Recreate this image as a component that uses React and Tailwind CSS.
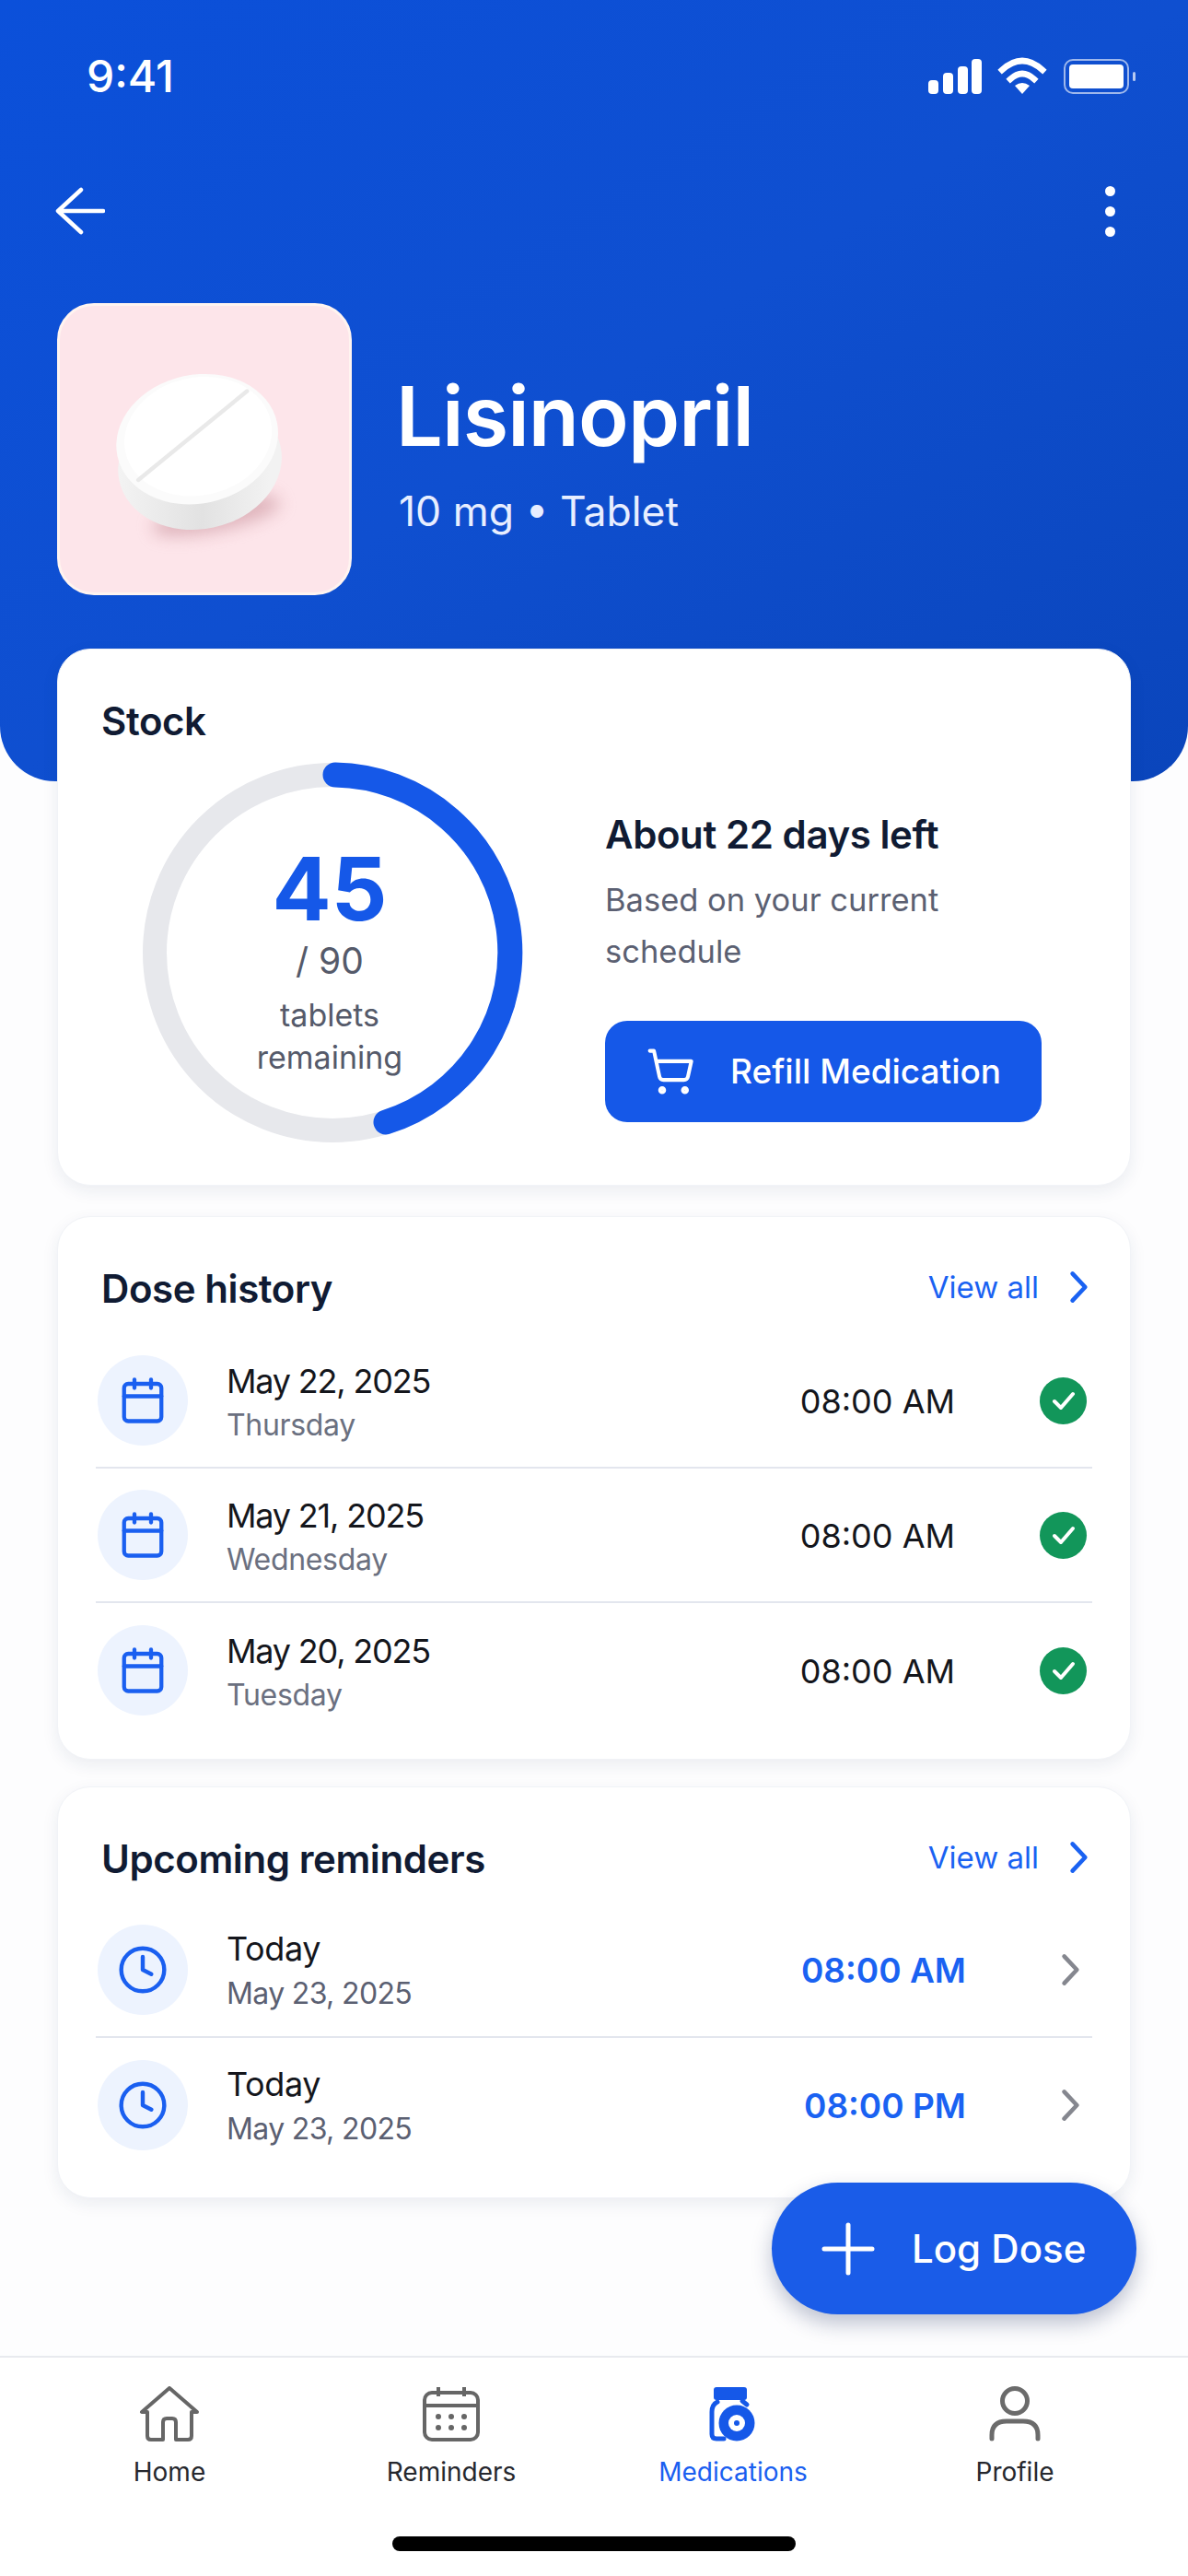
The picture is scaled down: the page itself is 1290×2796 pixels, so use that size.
import { Calendar, Clock, ShoppingCart } from "lucide-react";

const doses = [
  { date: "May 22, 2025", day: "Thursday" },
  { date: "May 21, 2025", day: "Wednesday" },
  { date: "May 20, 2025", day: "Tuesday" },
];

const reminders = [
  { time: "08:00 AM", sub: "May 23, 2025" },
  { time: "08:00 PM", sub: "May 23, 2025" },
];

const Chevron = ({ className }) => (
  <svg className={className} viewBox="0 0 24 38" fill="none" stroke="currentColor" strokeWidth="5" strokeLinecap="round" strokeLinejoin="round">
    <path d="M5 3 L20 19 L5 35" />
  </svg>
);

const StatusIcons = () => (
  <svg className="w-[228px] h-[42px]" viewBox="1007 62 228 42" fill="white">
    <rect x="1008" y="87" width="11" height="15" rx="4" />
    <rect x="1024" y="79" width="11" height="23" rx="4" />
    <rect x="1040" y="72" width="11" height="30" rx="4" />
    <rect x="1055" y="64" width="11" height="38" rx="4" />
    <path d="M1088 76 Q1110 56 1132 76 M1097 86 Q1110 74 1123 86" fill="none" stroke="white" strokeWidth="6.5" strokeLinecap="square" />
    <path d="M1102 93 Q1110 87 1118 93 L1110 102 Z" />
    <rect x="1156" y="65" width="69" height="36" rx="9" fill="none" stroke="white" strokeOpacity="0.6" strokeWidth="2" />
    <rect x="1161" y="70" width="59" height="26" rx="4" />
    <rect x="1230" y="78" width="3" height="10" rx="1.5" opacity="0.7" />
  </svg>
);

const PillImage = () => (
  <svg className="w-full h-full" viewBox="23 19 318 316">
    <defs>
      <linearGradient id="pillSide" x1="0" y1="0" x2="1" y2="0.2">
        <stop offset="0" stopColor="#f6f6f6" />
        <stop offset="0.6" stopColor="#e2e2e2" />
        <stop offset="1" stopColor="#f2f2f2" />
      </linearGradient>
      <filter id="pillBlur" x="-40%" y="-80%" width="180%" height="260%">
        <feGaussianBlur stdDeviation="9" />
      </filter>
    </defs>
    <ellipse cx="195" cy="250" rx="72" ry="17" fill="#c58a94" opacity="0.55" filter="url(#pillBlur)" transform="rotate(-12 195 250)" />
    <ellipse cx="177" cy="193" rx="91" ry="72" fill="url(#pillSide)" transform="rotate(-12 177 193)" />
    <ellipse cx="174" cy="166" rx="90" ry="71" fill="#fbfbfb" transform="rotate(-12 174 166)" />
    <ellipse cx="175" cy="163" rx="82" ry="65" fill="#ffffff" transform="rotate(-12 175 163)" />
    <path d="M229 113 L109 211" stroke="#e9e9e9" strokeWidth="4.5" strokeLinecap="round" />
  </svg>
);

const StockRing = () => (
  <svg className="absolute inset-0" viewBox="0 0 416 416" fill="none">
    <circle cx="208" cy="208" r="193" stroke="#e7e8ec" strokeWidth="26" />
    <path d="M211 15 A193 193 0 0 1 266 392" stroke="#1558e8" strokeWidth="27" strokeLinecap="round" />
  </svg>
);

const CheckBadge = () => (
  <div className="w-[51px] h-[51px] rounded-full bg-[#12965a] flex items-center justify-center">
    <svg className="w-[30px] h-[30px]" viewBox="0 0 30 30" fill="none" stroke="white" strokeWidth="4" strokeLinecap="round" strokeLinejoin="round">
      <path d="M5 16 L12 23 L25 8" />
    </svg>
  </div>
);

const Card = ({ className, children }) => (
  <section className={`bg-white rounded-[36px] border border-[#f1f3f7] shadow-[0_6px_18px_rgba(30,50,90,0.08)] ${className}`}>
    {children}
  </section>
);

const CardHead = ({ title, className }) => (
  <div className={`flex items-center justify-between pl-[6px] pr-[4px] ${className}`}>
    <h2 className="text-[42px] leading-[48px] font-semibold text-[#101b33] tracking-[-0.01em] -mt-[2px]">{title}</h2>
    <div className="flex items-center gap-[32px] text-[#1a62f2] -mt-[6px]">
      <span className="text-[33px] leading-[44px]">View all</span>
      <Chevron className="w-[22px] h-[36px]" />
    </div>
  </div>
);

const NavItem = ({ label, active, icon }) => (
  <div className="flex flex-col items-center">
    <div className="h-[60px] flex items-center justify-center">{icon}</div>
    <span className={`mt-[15px] text-[28px] leading-[36px] ${active ? "text-[#1a5ff0]" : "text-[#26282e]"}`}>{label}</span>
  </div>
);

const App = () => {
  return (
    <div className="w-[1290px] h-[2796px] relative overflow-hidden flex flex-col bg-[#fdfdfe] font-[Inter,sans-serif]">
      <header className="h-[848px] shrink-0 rounded-b-[60px] bg-linear-to-br from-[#0b50da] via-[#0f4fd0] to-[#0a45bb] text-white">
        <div className="pt-[62px] h-[104px] flex items-center justify-between pl-[94px] pr-[55px]">
          <span className="text-[48px] leading-[42px] font-medium">9:41</span>
          <StatusIcons />
        </div>
        <div className="mt-[99px] h-[52px] flex items-center justify-between pl-[60px] pr-[79px]">
          <svg className="w-[54px] h-[52px]" viewBox="0 0 54 52" fill="none" stroke="white" strokeWidth="4.5" strokeLinecap="round" strokeLinejoin="round">
            <path d="M28 3 L3 26 L28 49 M3 26 H52" />
          </svg>
          <div className="flex flex-col gap-[11px]">
            <span className="block w-[11px] h-[11px] rounded-full bg-white" />
            <span className="block w-[11px] h-[11px] rounded-full bg-white" />
            <span className="block w-[11px] h-[11px] rounded-full bg-white" />
          </div>
        </div>
        <div className="mt-[74px] px-[62px] flex items-center gap-[48px]">
          <div className="w-[320px] h-[317px] rounded-[40px] bg-[#fde5ea] border-[3px] border-[#fff4f0] overflow-hidden shrink-0">
            <PillImage />
          </div>
          <div className="mt-[7px]">
            <h1 className="text-[90px] leading-[104px] font-semibold tracking-[-0.01em]">Lisinopril</h1>
            <p className="mt-[23px] pl-[3px] text-[44.5px] leading-[56px] text-[#e8eeff]">10 mg • Tablet</p>
          </div>
        </div>
      </header>

      <main className="relative -mt-[144px] px-[62px] flex flex-col">
        <Card className="h-[583px] relative">
          <h2 className="absolute left-[47px] top-[54px] text-[42px] leading-[48px] font-semibold text-[#101b33] tracking-[-0.01em]">Stock</h2>
          <div className="pt-[121px] pl-[90px] flex">
            <div className="relative w-[416px] h-[416px] shrink-0 text-center">
              <StockRing />
              <div className="relative pt-[89px] pr-[6px] flex flex-col items-center">
                <span className="text-[95px] leading-[100px] font-bold text-[#1558e8]">45</span>
                <span className="mt-[5px] text-[39px] leading-[46px] text-[#555a6a]">/ 90</span>
                <span className="mt-[13px] text-[34px] leading-[46px] text-[#555a6a]">tablets<br />remaining</span>
              </div>
            </div>
            <div className="ml-[88px] pt-[54px]">
              <p className="text-[42px] leading-[52px] font-semibold text-[#101b33] tracking-[-0.01em]">About 22 days left</p>
              <p className="mt-[17px] text-[34.5px] leading-[56px] text-[#5b6072]">Based on your current<br />schedule</p>
              <button className="mt-[47px] w-[474px] h-[110px] rounded-[24px] bg-[#1558e8] flex items-center pl-[44px] text-white">
                <ShoppingCart size={54} strokeWidth={1.8} />
                <span className="ml-[38px] text-[37px] font-medium">Refill Medication</span>
              </button>
            </div>
          </div>
        </Card>

        <Card className="mt-[33px] h-[590px] px-[41px]">
          <CardHead title="Dose history" className="h-[127px] pt-[31px]" />
          {doses.map((d, i) => (
            <div key={d.date} className={`h-[146px] flex items-center pl-[2px] pr-[6px] ${i < 2 ? "border-b-2 border-[#e3e6ee]" : ""}`}>
              <div className="w-[98px] h-[98px] rounded-full bg-[#edf3fe] flex items-center justify-center shrink-0">
                <Calendar size={54} strokeWidth={1.9} className="text-[#1a5ff0]" />
              </div>
              <div className="ml-[42px] pt-[5px] flex-1">
                <div className="text-[36px] leading-[48px] tracking-[-0.033em] text-[#14161c]">{d.date}</div>
                <div className="text-[32px] leading-[48px] tracking-[-0.01em] text-[#6b7080]">{d.day}</div>
              </div>
              <span className="pt-[2px] text-[36px] text-[#14161c]">08:00 AM</span>
              <div className="ml-[92px]"><CheckBadge /></div>
            </div>
          ))}
        </Card>

        <Card className="mt-[29px] h-[447px] px-[41px]">
          <CardHead title="Upcoming reminders" className="h-[126px] pt-[31px]" />
          {reminders.map((r, i) => (
            <div key={r.time} className={`h-[146px] flex items-center pl-[2px] pr-[13px] ${i < 1 ? "border-b-2 border-[#e3e6ee]" : ""}`}>
              <div className="w-[98px] h-[98px] rounded-full bg-[#edf3fe] flex items-center justify-center shrink-0">
                <Clock size={56} strokeWidth={1.9} className="text-[#1a5ff0]" />
              </div>
              <div className="ml-[42px] pt-[4px] flex-1">
                <div className="text-[36px] leading-[48px] tracking-[-0.01em] text-[#14161c]">Today</div>
                <div className="text-[32px] leading-[50px] tracking-[-0.02em] text-[#5b6072]">{r.sub}</div>
              </div>
              <span className="pt-[2px] text-[37px] font-semibold text-[#1a62f2]">{r.time}</span>
              <Chevron className="ml-[102px] w-[22px] h-[36px] text-[#85878f]" />
            </div>
          ))}
        </Card>
      </main>

      <button className="absolute left-[838px] top-[2369px] w-[396px] h-[143px] rounded-full bg-[#1a5ce8] text-white flex items-center pl-[54px] shadow-[0_10px_22px_rgba(20,40,90,0.28)]">
        <svg className="w-[58px] h-[58px]" viewBox="0 0 58 58" fill="none" stroke="white" strokeWidth="5" strokeLinecap="round">
          <path d="M29 3 V55 M3 29 H55" />
        </svg>
        <span className="ml-[40px] text-[42px] font-medium">Log Dose</span>
      </button>

      <nav className="mt-auto h-[239px] shrink-0 bg-white border-t-2 border-[#e8eaef] flex flex-col">
        <div className="pt-[31px] pl-[31px] pr-[35px] grid grid-cols-4">
          <NavItem label="Home" icon={
            <svg className="w-[66px] h-[60px]" viewBox="0 0 66 60" fill="none" stroke="#666" strokeWidth="4" strokeLinejoin="round">
              <path d="M33 2 L3 28 H9 V54 Q9 58 13 58 H26 V39 Q26 35 30 35 H36 Q40 35 40 39 V58 H53 Q57 58 57 54 V28 H63 Z" />
            </svg>
          } />
          <NavItem label="Reminders" icon={
            <svg className="w-[64px] h-[60px]" viewBox="0 0 64 60" fill="none" stroke="#666" strokeWidth="4">
              <rect x="3" y="7" width="58" height="51" rx="8" />
              <path d="M3 21 H61 M18 1 V11 M46 1 V11" />
              <g fill="#666" stroke="none">
                <circle cx="18" cy="33" r="3" /><circle cx="32" cy="33" r="3" /><circle cx="46" cy="33" r="3" />
                <circle cx="18" cy="45" r="3" /><circle cx="32" cy="45" r="3" /><circle cx="46" cy="45" r="3" />
              </g>
            </svg>
          } />
          <NavItem active label="Medications" icon={
            <svg className="w-[52px] h-[60px]" viewBox="0 0 52 60" fill="none">
              <rect x="5" y="1" width="36" height="14" rx="3" fill="#1558e8" />
              <path d="M9 17 Q3 20 3 28 V52 Q3 57 8 57 H16 M36 16 L41 20" stroke="#1558e8" strokeWidth="5" strokeLinecap="round" />
              <circle cx="30" cy="40" r="19.5" fill="#1558e8" />
              <circle cx="30" cy="40" r="9" fill="white" />
              <circle cx="30" cy="40" r="3" fill="#1558e8" />
            </svg>
          } />
          <NavItem label="Profile" icon={
            <svg className="w-[58px] h-[60px]" viewBox="0 0 58 60" fill="none" stroke="#6b6b6b" strokeWidth="5" strokeLinecap="round">
              <circle cx="29" cy="16" r="13.5" />
              <path d="M4 57 V53 Q4 38 20 38 H38 Q54 38 54 53 V57" />
            </svg>
          } />
        </div>
        <div className="mt-auto mb-[27px] mx-auto w-[438px] h-[16px] rounded-full bg-black" />
      </nav>
    </div>
  );
};

export default App;
